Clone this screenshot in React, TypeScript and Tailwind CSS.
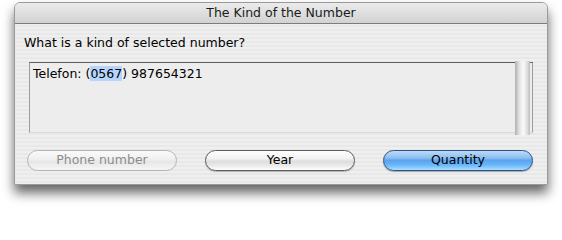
const font = { fontFamily: '"DejaVu Sans", "Liberation Sans", sans-serif' }

function AquaButton({ label, kind }: { label: string; kind: "disabled" | "normal" | "default" }) {
  const styles = {
    disabled:
      "border-[#b4b4b4] text-[#8c8c8c] bg-[linear-gradient(to_bottom,#fbfbfb_0%,#efefef_45%,#e6e6e6_55%,#f6f6f6_100%)]",
    normal:
      "border-[#5c5c5c] text-black bg-[linear-gradient(to_bottom,#ffffff_0%,#f2f2f2_40%,#dedede_55%,#ececec_80%,#ffffff_100%)] shadow-[0_1px_1px_rgba(0,0,0,0.25)]",
    default:
      "border-[#2f4f86] text-black bg-[linear-gradient(to_bottom,#bcdaf7_0%,#8fc0f1_35%,#5aa3ee_50%,#6db8fb_75%,#a8e0ff_100%)] shadow-[0_1px_1px_rgba(0,0,0,0.3)]",
  }[kind]
  return (
    <div
      className={`w-[150px] h-[21px] rounded-full border flex items-center justify-center text-[12.5px] leading-none ${styles}`}
    >
      {label}
    </div>
  )
}

export default function App() {
  return (
    <div className="w-[562px] h-[207px] bg-white overflow-hidden pt-[2px] pl-[14px]" style={font}>
      <div className="w-[534px] h-[183px] rounded-t-[6px] border border-[#9a9a9a] overflow-hidden flex flex-col bg-[repeating-linear-gradient(to_bottom,#efefef_0px,#efefef_2px,#e8e8e8_2px,#e8e8e8_4px)] shadow-[0_8px_12px_rgba(0,0,0,0.6)]">
        <div className="h-[21px] shrink-0 flex items-center justify-center border-b border-[#7c7c7c] bg-[linear-gradient(to_bottom,#ebebeb,#d2d2d2)] text-[12.5px] text-[#1a1a1a]">
          The Kind of the Number
        </div>
        <div className="px-[9px] pt-[11px] text-[12.5px] leading-[16px] text-black">
          What is a kind of selected number?
        </div>
        <div className="mx-[14px] mt-[11px] h-[71px] flex border-t border-t-[#5e5e5e] border-x border-x-[#9c9c9c] border-b border-b-[#dadada] bg-[#ededed]">
          <div className="flex-1 pl-[3px] pt-[3px] text-[12.5px] leading-[16px] text-black">
            Telefon: (<span className="bg-[#b5d5fe]">0567</span>) 987654321
          </div>
          <div className="w-[15px] -mt-[2px] -mb-[3px] mr-[2px] bg-[linear-gradient(to_right,#b0b0b0_0%,#e4e4e4_30%,#fafafa_55%,#e0e0e0_80%,#bdbdbd_100%)]" />
        </div>
        <div className="flex justify-between pl-[12px] pr-[14px] mt-[17px]">
          <AquaButton label="Phone number" kind="disabled" />
          <AquaButton label="Year" kind="normal" />
          <AquaButton label="Quantity" kind="default" />
        </div>
      </div>
    </div>
  )
}
